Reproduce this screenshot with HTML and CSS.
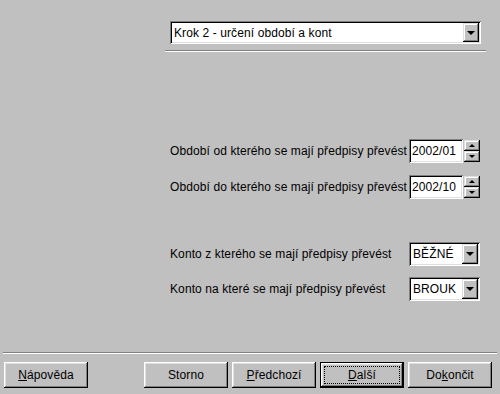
FILE: index.html
```html
<!DOCTYPE html>
<html>
<head>
<meta charset="utf-8" />
<title>Převod předpisů</title>
<link rel="stylesheet" href="styles.css">
</head>
<body>
<div class="wizard">
  <div class="head">
    <div class="combo combo-step">
      <span class="combo-text">Krok 2 - určení období a kont</span>
      <span class="combo-btn"><span class="arrow-down"></span></span>
    </div>
    <div class="sep sep-head"></div>
  </div>

  <div class="fields">
    <div class="row row-first">
      <span class="label">Období od kterého se mají předpisy převést</span>
      <span class="edit">2002/01</span>
      <span class="spin">
        <span class="spin-btn"><span class="arrow-up"></span></span>
        <span class="spin-btn"><span class="arrow-small-down"></span></span>
      </span>
    </div>
    <div class="row row-second">
      <span class="label">Období do kterého se mají předpisy převést</span>
      <span class="edit">2002/10</span>
      <span class="spin">
        <span class="spin-btn"><span class="arrow-up"></span></span>
        <span class="spin-btn"><span class="arrow-small-down"></span></span>
      </span>
    </div>
    <div class="row row-konto">
      <span class="label">Konto z kterého se mají předpisy převést</span>
      <div class="combo combo-small">
        <span class="combo-text">BĚŽNÉ</span>
        <span class="combo-btn"><span class="arrow-down"></span></span>
      </div>
    </div>
    <div class="row row-second">
      <span class="label">Konto na které se mají předpisy převést</span>
      <div class="combo combo-small">
        <span class="combo-text">BROUK</span>
        <span class="combo-btn"><span class="arrow-down"></span></span>
      </div>
    </div>
  </div>

  <div class="foot">
    <div class="sep sep-foot"></div>
    <div class="buttons">
      <span class="btn"><u>N</u>ápověda</span>
      <span class="spacer"></span>
      <span class="btn">Storno</span>
      <span class="btn"><u>P</u>ředchozí</span>
      <span class="btn btn-default"><span class="focus"><u>D</u>alší</span></span>
      <span class="btn">Do<u>k</u>ončit</span>
    </div>
  </div>
</div>
</body>
</html>
```

FILE: styles.css
```css
body {
  margin: 0;
  background: #c0c0c0;
  font-family: "Liberation Sans", Arial, sans-serif;
  font-size: 12px;
  letter-spacing: 0.1px;
  color: #000;
}
.wizard {
  width: 500px;
  height: 394px;
  display: flex;
  flex-direction: column;
}

/* top step selector */
.head {
  padding: 21px 0 0 165px;
}
.combo {
  box-sizing: border-box;
  display: flex;
  align-items: stretch;
  background: #fff;
  padding: 2px;
  box-shadow: inset 1px 1px #808080, inset -1px -1px #fff,
              inset 2px 2px #000, inset -2px -2px #dfdfdf;
}
.combo-step {
  width: 311px;
  height: 23px;
  margin-left: 5px;
}
.combo-small {
  width: 71px;
  height: 24px;
}
.combo-text {
  flex: 1;
  display: flex;
  align-items: center;
  padding-left: 2px;
  white-space: nowrap;
  overflow: hidden;
}
.combo-btn {
  width: 16px;
  background: #c0c0c0;
  display: flex;
  align-items: center;
  justify-content: center;
  box-shadow: inset -1px -1px #000, inset 1px 1px #dfdfdf,
              inset -2px -2px #808080, inset 2px 2px #fff;
}
.arrow-down {
  width: 0;
  height: 0;
  border-left: 4px solid transparent;
  border-right: 4px solid transparent;
  border-top: 4px solid #000;
}

.sep {
  border-top: 1px solid #808080;
  border-bottom: 1px solid #fff;
}
.sep-head {
  width: 321px;
  margin-top: 6px;
}

/* fields */
.fields {
  padding-left: 170px;
}
.row {
  display: flex;
  align-items: center;
  height: 24px;
}
.row-first {
  margin-top: 87px;
}
.row-second {
  margin-top: 12px;
}
.row-konto {
  margin-top: 43px;
}
.row-konto + .row-second {
  margin-top: 11px;
}
.label {
  width: 239px;
  white-space: nowrap;
}
.edit {
  box-sizing: border-box;
  width: 54px;
  height: 24px;
  background: #fff;
  padding: 0 3px;
  display: flex;
  align-items: center;
  box-shadow: inset 1px 1px #808080, inset -1px -1px #fff,
              inset 2px 2px #000, inset -2px -2px #dfdfdf;
}
.spin {
  display: flex;
  flex-direction: column;
  width: 16px;
  height: 22px;
  margin-left: 1px;
}
.spin-btn {
  flex: 1;
  display: flex;
  align-items: center;
  justify-content: center;
  background: #c0c0c0;
  box-shadow: inset -1px -1px #000, inset 1px 1px #dfdfdf,
              inset -2px -2px #808080, inset 2px 2px #fff;
}
.arrow-up {
  width: 0;
  height: 0;
  border-left: 3px solid transparent;
  border-right: 3px solid transparent;
  border-bottom: 3px solid #000;
}
.arrow-small-down {
  width: 0;
  height: 0;
  border-left: 3px solid transparent;
  border-right: 3px solid transparent;
  border-top: 3px solid #000;
}

/* bottom buttons */
.foot {
  margin-top: auto;
  padding: 0 3px 6px;
}
.buttons {
  display: flex;
  gap: 4px;
  margin-top: 8px;
  padding-left: 1px;
}
.spacer {
  width: 48px;
}
.btn {
  box-sizing: border-box;
  width: 84px;
  height: 26px;
  display: flex;
  align-items: center;
  justify-content: center;
  background: #c0c0c0;
  box-shadow: inset -1px -1px #000, inset 1px 1px #fff,
              inset -2px -2px #808080, inset 2px 2px #dfdfdf;
}
.btn-default {
  border: 1px solid #000;
  align-items: stretch;
}
.focus {
  flex: 1;
  margin: 3px;
  border: 1px dotted #000;
  display: flex;
  align-items: center;
  justify-content: center;
}
```
